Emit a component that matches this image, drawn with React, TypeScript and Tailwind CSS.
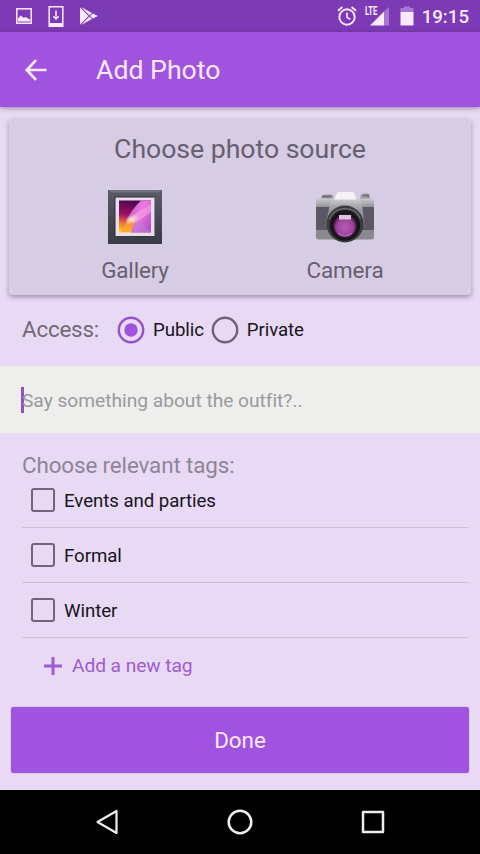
import { useState } from "react"

const TAGS = ["Events and parties", "Formal", "Winter"]

function StatusBar() {
  return (
    <div className="flex h-8 shrink-0 items-center justify-between bg-[#7d3ab5] pr-[11px] pl-4 text-[#fbeaff]">
      <div className="flex items-center gap-4">
        <svg className="h-4 w-4" viewBox="0 0 16 16" fill="none">
          <rect x="0.8" y="0.8" width="14.4" height="14.4" stroke="currentColor" strokeWidth="1.5" />
          <path d="M2 13.4V10.6L4.7 7.6L7.6 9.7L9.5 8.9L14 11.6V13.4Z" fill="currentColor" />
        </svg>
        <svg className="h-[21px] w-4" viewBox="0 0 16 21" fill="none">
          <path d="M1.2 0.8H14.8V20.2H1.2Z" stroke="currentColor" strokeWidth="1.5" />
          <path d="M1 17H15V20.5H1Z" fill="currentColor" />
          <path d="M8 4.5V12M5.3 10.3L8 13L10.7 10.3" stroke="currentColor" strokeWidth="1.5" />
        </svg>
        <svg className="h-[18px] w-[18px]" viewBox="0 0 18 18">
          <path d="M0 0.5V17.5L8.5 9Z" fill="currentColor" />
          <path d="M1 0L12 6L9.2 8.3ZM1 18L12 12L9.2 9.7ZM12.9 6.4L17.8 9L12.9 11.6L10 9Z" fill="currentColor" />
        </svg>
      </div>

      <div className="flex items-center">
        <svg className="mr-2 h-5 w-5" viewBox="0 0 20 20" fill="none" stroke="currentColor">
          <circle cx="10" cy="11" r="7.7" strokeWidth="1.9" />
          <path d="M10 6.6V11.4L13.3 13.3" strokeWidth="1.6" />
          <path d="M1 4.8L5.4 1.1M19 4.8L14.6 1.1" strokeWidth="1.9" />
        </svg>
        <div className="mr-[11px] flex h-5 w-6">
          <span className="h-3 w-[13px] origin-left scale-x-[0.64] text-[12px] leading-[11px] font-bold">LTE</span>
          <svg className="-ml-[8px] h-5 w-[19px] shrink-0" viewBox="0 0 19 20">
            <path d="M19 1V19.5H14V5.5Z" fill="currentColor" opacity="0.35" />
            <path d="M14 5.5V19.5H0Z" fill="currentColor" />
          </svg>
        </div>
        <svg className="mr-[8px] h-5 w-[14px]" viewBox="0 0 14 20">
          <path d="M4 0.5H10V2H13.5V6H0.5V2H4Z" fill="currentColor" opacity="0.35" />
          <path d="M0.5 6H13.5V19.5H0.5Z" fill="currentColor" />
        </svg>
        <span className="pt-px text-[18.67px] leading-5 font-medium">19:15</span>
      </div>
    </div>
  )
}

function GalleryIcon() {
  return (
    <svg className="h-16 w-16" viewBox="0 0 64 64">
      <defs>
        <linearGradient id="frame" x1="0" y1="0" x2="0" y2="1">
          <stop offset="0" stopColor="#595c68" />
          <stop offset="1" stopColor="#383b43" />
        </linearGradient>
        <linearGradient id="sky" x1="0.3" y1="0" x2="0.1" y2="1">
          <stop offset="0" stopColor="#4d0750" />
          <stop offset="0.45" stopColor="#a0105f" />
          <stop offset="0.7" stopColor="#ee7130" />
          <stop offset="1" stopColor="#ffd51b" />
        </linearGradient>
        <linearGradient id="ray" x1="0" y1="0.2" x2="1" y2="0.8">
          <stop offset="0" stopColor="#b357b4" />
          <stop offset="0.5" stopColor="#ed79df" />
          <stop offset="1" stopColor="#b552c5" />
        </linearGradient>
        <radialGradient id="glow">
          <stop offset="0" stopColor="#fff4d8" />
          <stop offset="1" stopColor="#ffc7a8" stopOpacity="0" />
        </radialGradient>
      </defs>
      <rect x="5" y="6" width="54" height="54" fill="url(#frame)" />
      <path d="M5 6H59L55 8.5H9Z" fill="#72737f" />
      <rect x="11.5" y="12.5" width="40" height="40" fill="#2c2c37" />
      <rect x="12.5" y="13.5" width="39" height="38.5" fill="#e9deee" />
      <rect x="16" y="16.5" width="32" height="32" fill="url(#sky)" />
      <path d="M38 16.5H48V48.5H28L31 39L22 39Q28 26 38 16.5Z" fill="url(#ray)" />
      <path d="M24 35L48 20V28L31 40Z" fill="#f6a3e8" opacity="0.6" />
      <path d="M31 39L37 37L48 48.5H28Z" fill="#bd76d9" opacity="0.6" />
      <path d="M18 48L25 36L33 37L26 48Z" fill="#ffa634" opacity="0.75" />
      <ellipse cx="29" cy="35.5" rx="8" ry="4.5" fill="url(#glow)" transform="rotate(-25 29 35.5)" />
    </svg>
  )
}

function CameraIcon() {
  return (
    <svg className="h-16 w-16" viewBox="0 0 64 64">
      <defs>
        <linearGradient id="metal" x1="0" y1="0" x2="0" y2="1">
          <stop offset="0" stopColor="#cccbcf" />
          <stop offset="0.25" stopColor="#88878d" />
          <stop offset="1" stopColor="#8b898e" />
        </linearGradient>
        <linearGradient id="prism" x1="0" y1="0" x2="0" y2="1">
          <stop offset="0" stopColor="#f8f5f8" />
          <stop offset="0.4" stopColor="#a9a7ac" />
          <stop offset="1" stopColor="#646169" />
        </linearGradient>
        <radialGradient id="lens" cx="0.5" cy="0.55">
          <stop offset="0" stopColor="#b95cb9" />
          <stop offset="0.75" stopColor="#9a439b" />
          <stop offset="1" stopColor="#582056" />
        </radialGradient>
      </defs>
      <path d="M8 15Q8 11 12 10.5H18Q21 10.5 20 15H8ZM48 10.5Q50 9 55 9.5Q57 10 57 15H47Z" fill="#9b9aa0" />
      <path d="M9 12.5H18M50 11.5H56" stroke="#67676c" strokeWidth="1.3" />
      <rect x="3" y="14.5" width="58" height="41" rx="2.5" fill="url(#metal)" />
      <rect x="3" y="23" width="58" height="23" fill="#5d5763" />
      <path d="M24 9Q25 8 27 8H38Q40 8 41 9L49 20L52 43H12L17 20Z" fill="url(#prism)" />
      <path d="M24 9L21.5 15.5H43.5L40 8.5L27 8Z" fill="#f5f1f6" />
      <circle cx="32" cy="40" r="18.5" fill="#3b3c40" />
      <circle cx="32" cy="41.5" r="15.2" fill="#19151c" />
      <path d="M16.5 35Q20 25 32 24.5Q44 25 47.5 35" fill="none" stroke="#737577" strokeWidth="1.1" />
      <circle cx="32" cy="42" r="11.3" fill="url(#lens)" />
      <path d="M26 31H38V35.5H26Z" fill="#dfc3de" />
      <path d="M25 49Q32 54.5 39 49" fill="none" stroke="#b568b6" strokeWidth="1.1" />
    </svg>
  )
}

type RadioProps = {
  label: string
  checked: boolean
  onSelect: () => void
}

function Radio({ label, checked, onSelect }: RadioProps) {
  return (
    <button onClick={onSelect} className="flex items-center gap-2 text-[18.67px] tracking-[-0.1px] text-[#19131e]">
      <svg className="h-7 w-7" viewBox="0 0 28 28" fill="none">
        <circle cx="14" cy="14" r="12.2" stroke={checked ? "#9652c9" : "#716078"} strokeWidth="2.4" />
        {checked && <circle cx="14" cy="14" r="6.7" fill="#9f53dd" />}
      </svg>
      <span className="pt-px">{label}</span>
    </button>
  )
}

function App() {
  const [access, setAccess] = useState("Public")
  const [selected, setSelected] = useState<string[]>([])

  const toggleTag = (tag: string) => {
    setSelected(selected.includes(tag) ? selected.filter((t) => t !== tag) : [...selected, tag])
  }

  return (
    <div className="flex h-[854px] w-[480px] flex-col overflow-hidden bg-[#e8daf4] font-['Roboto',sans-serif] select-none">
      <StatusBar />

      <header className="flex h-[74.5px] shrink-0 items-center bg-[#9f53df] pt-px pl-6 text-[#fdeaff] shadow-[0_1px_5px_rgba(70,40,90,0.5)]">
        <svg className="h-6 w-6" viewBox="0 0 24 24" fill="none" stroke="currentColor" strokeWidth="2.7">
          <path d="M22.5 12H3M12 2.2L2.8 12L12 21.8" />
        </svg>
        <h1 className="ml-12 pt-px text-[26.67px] leading-8">Add Photo</h1>
      </header>

      {/* Photo source */}
      <section className="mx-[9px] mt-[12.5px] h-[176px] shrink-0 rounded-[3px] bg-[#d6cce3] pt-[14px] text-center text-[#675f70] shadow-[0_2px_5px_rgba(70,40,90,0.45)]">
        <h2 className="text-[26.67px] leading-8 tracking-[-0.04px]">Choose photo source</h2>
        <div className="mt-[18.5px] flex px-[21px]">
          <button className="flex flex-1 flex-col items-center text-[22.4px] leading-7 tracking-[-0.15px]">
            <GalleryIcon />
            <span className="mt-2">Gallery</span>
          </button>
          <button className="flex flex-1 flex-col items-center text-[22.4px] leading-7 tracking-[-0.1px]">
            <CameraIcon />
            <span className="mt-2">Camera</span>
          </button>
        </div>
      </section>

      {/* Access */}
      <div className="flex h-[71px] shrink-0 items-center pb-[2px] pl-[22px]">
        <span className="mr-[18px] text-[22.4px] tracking-[-0.2px] text-[#716878]">Access:</span>
        <div className="flex gap-[7px]">
          <Radio label="Public" checked={access === "Public"} onSelect={() => setAccess("Public")} />
          <Radio label="Private" checked={access === "Private"} onSelect={() => setAccess("Private")} />
        </div>
      </div>

      {/* Description */}
      <div className="flex h-[67px] shrink-0 items-center bg-[#eeeeed] pl-[21px]">
        <span className="h-[26px] w-[2.5px] bg-[#9350c6]" />
        <span className="-ml-[1.5px] pt-1 text-[19.2px] tracking-[-0.02px] text-[#9a999b]">
          Say something about the outfit?..
        </span>
      </div>

      {/* Tags */}
      <section className="shrink-0 pt-[18px] pr-[11px] pl-[22px]">
        <h2 className="h-[22.5px] text-[22.4px] leading-7 tracking-[-0.12px] text-[#8e8498]">Choose relevant tags:</h2>
        {TAGS.map((tag) => (
          <button
            key={tag}
            onClick={() => toggleTag(tag)}
            className="flex h-[54.7px] w-full items-center border-b-[1.5px] border-[#cec0d9] pl-[8.5px] text-[18.67px] tracking-[-0.06px] text-[#19131e]"
          >
            <span
              className={`mr-[9.5px] h-6 w-6 rounded-[3px] border-[2.5px] border-[#746379] ${
                selected.includes(tag) ? "bg-[#9f53df]" : ""
              }`}
            />
            <span className="pt-[2px]">{tag}</span>
          </button>
        ))}
        <button className="flex h-[57px] items-center pl-[22px] text-[19.2px] tracking-[-0.08px] text-[#a05bd0]">
          <svg className="mr-[10px] h-[18px] w-[18px]" viewBox="0 0 18 18" stroke="currentColor" strokeWidth="3">
            <path d="M9 0V18M0 9H18" />
          </svg>
          <span className="pt-px">Add a new tag</span>
        </button>
      </section>

      <button className="mx-[11px] mt-auto mb-[17px] h-[66px] shrink-0 rounded-[3px] bg-[#9f53df] pt-px text-[22.4px] text-[#fdeaff] shadow-[0_0_1px_#8752ae]">
        Done
      </button>

      {/* Navigation bar */}
      <nav className="flex h-16 shrink-0 items-center justify-between bg-black px-[93px] text-[#eeeeee]">
        <svg className="h-7 w-7" viewBox="0 0 28 28" fill="none" stroke="currentColor" strokeWidth="2.2" strokeLinejoin="round">
          <path d="M23.5 3V25L4.5 14Z" />
        </svg>
        <svg className="h-7 w-7" viewBox="0 0 28 28" fill="none" stroke="currentColor" strokeWidth="2.5">
          <circle cx="14" cy="14" r="11.3" />
        </svg>
        <svg className="h-7 w-7" viewBox="0 0 28 28" fill="none" stroke="currentColor" strokeWidth="2.5" strokeLinejoin="round">
          <rect x="4" y="4" width="20" height="20" />
        </svg>
      </nav>
    </div>
  )
}

export default App
